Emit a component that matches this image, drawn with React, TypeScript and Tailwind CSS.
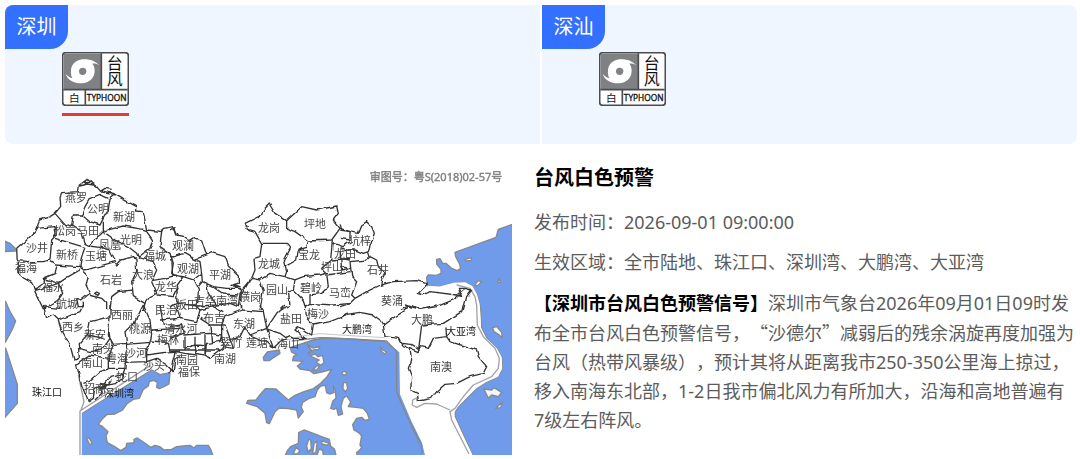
import React, { useState } from 'react';

interface Region {
  id: string;
  name: string;
}

interface MapLabel {
  text: string;
  x: number;
  y: number;
}

interface MapTile {
  id: string;
  transform: string;
  borders: string;
}

const regions: Region[] = [
  { id: 'shenzhen', name: '深圳' },
  { id: 'shenshan', name: '深汕' },
];

const districts: MapLabel[] = [
  { text: '燕罗', x: 76, y: 197 },
  { text: '公明', x: 98, y: 208 },
  { text: '新湖', x: 124, y: 216 },
  { text: '松岗', x: 65, y: 230 },
  { text: '马田', x: 88, y: 230 },
  { text: '凤凰', x: 110, y: 244 },
  { text: '光明', x: 131, y: 239 },
  { text: '沙井', x: 37, y: 247 },
  { text: '新桥', x: 67, y: 254 },
  { text: '玉塘', x: 96, y: 255 },
  { text: '福城', x: 155, y: 255 },
  { text: '福海', x: 26, y: 267 },
  { text: '石岩', x: 111, y: 279 },
  { text: '大浪', x: 143, y: 274 },
  { text: '福永', x: 53, y: 286 },
  { text: '龙华', x: 166, y: 286 },
  { text: '航城', x: 67, y: 303 },
  { text: '观澜', x: 183, y: 245 },
  { text: '观湖', x: 188, y: 268 },
  { text: '平湖', x: 220, y: 274 },
  { text: '民治', x: 166, y: 309 },
  { text: '坂田', x: 187, y: 304 },
  { text: '吉华', x: 205, y: 300 },
  { text: '南湾', x: 227, y: 300 },
  { text: '横岗', x: 250, y: 296 },
  { text: '龙岗', x: 269, y: 227 },
  { text: '坪地', x: 315, y: 223 },
  { text: '宝龙', x: 309, y: 254 },
  { text: '龙城', x: 269, y: 263 },
  { text: '龙田', x: 345, y: 253 },
  { text: '坪山', x: 332, y: 266 },
  { text: '坑梓', x: 360, y: 240 },
  { text: '石井', x: 378, y: 269 },
  { text: '园山', x: 277, y: 289 },
  { text: '碧岭', x: 311, y: 287 },
  { text: '马峦', x: 340, y: 292 },
  { text: '葵涌', x: 392, y: 300 },
  { text: '大鹏', x: 422, y: 319 },
  { text: '梅沙', x: 318, y: 313 },
  { text: '盐田', x: 291, y: 318 },
  { text: '东湖', x: 244, y: 323 },
  { text: '布吉', x: 214, y: 317 },
  { text: '清水河', x: 181, y: 328 },
  { text: '西乡', x: 73, y: 326 },
  { text: '西丽', x: 122, y: 314 },
  { text: '新安', x: 95, y: 334 },
  { text: '桃源', x: 140, y: 328 },
  { text: '梅林', x: 168, y: 339 },
  { text: '南头', x: 103, y: 348 },
  { text: '粤海', x: 117, y: 358 },
  { text: '沙河', x: 136, y: 352 },
  { text: '沙头', x: 154, y: 365 },
  { text: '南山', x: 92, y: 362 },
  { text: '蛇口', x: 127, y: 376 },
  { text: '招商', x: 95, y: 388 },
  { text: '南园', x: 187, y: 359 },
  { text: '福保', x: 189, y: 371 },
  { text: '南湖', x: 225, y: 358 },
  { text: '翠竹', x: 231, y: 342 },
  { text: '莲塘', x: 257, y: 342 },
  { text: '海山', x: 288, y: 343 },
  { text: '南澳', x: 441, y: 366 },
];

const waters: MapLabel[] = [
  { text: '珠江口', x: 47, y: 392 },
  { text: '深圳湾', x: 119, y: 393 },
  { text: '大鹏湾', x: 357, y: 329 },
  { text: '大亚湾', x: 461, y: 331 },
];

// Borders are stored per map tile, at three units to a map unit
const tiles: MapTile[] = [
  {
    id: 'nw',
    transform: 'translate(0 160) scale(0.3333)',
    borders:
      'M50,268 L75,245 105,215 118,180 150,170 165,160 182,140 180,110 185,98 235,95 238,75 262,58 275,70 290,80 300,92 340,100 370,118 410,140 410,153 430,155 440,210 485,215 490,205 520,200 535,225 M262,58 L256,70 270,66 M240,78 L262,72 285,76 M300,95 L315,85 335,88 M318,100 L340,102 M50,268 L52,305 60,345 95,365 105,395 130,447 M110,205 L165,200 168,225 155,240 150,300 130,305 90,305 52,302 M165,160 L200,200 215,195 220,165 245,165 255,140 270,115 300,103 325,115 M245,165 L270,185 300,195 310,175 325,150 330,115 345,103 M310,185 L310,215 M215,195 L245,215 255,250 270,258 280,240 300,225 310,215 330,208 370,198 430,208 440,212 M165,235 L215,250 255,262 M310,215 L345,240 385,260 410,280 415,292 M440,215 L458,240 450,265 415,292 M270,258 L300,262 330,270 345,300 M255,262 L245,290 240,320 165,315 150,305 M240,320 L245,330 265,328 345,305 350,315 365,300 400,290 408,295 M240,330 L205,350 175,370 130,355 M170,320 L165,340 130,355 130,370 105,390 M105,392 L145,380 175,370 188,400 175,420 130,447 M245,330 L265,350 258,375 270,400 245,420 230,415 M230,415 L235,440 250,440 250,425 M270,405 L305,415 320,430 320,450 M408,295 L410,335 395,365 398,390 355,395 335,410 330,450 M398,390 L400,410 435,430 450,410 470,400 455,365 470,330 460,305 415,292 M455,362 L495,355 530,345 M485,215 L480,260 510,280 520,310 515,340 530,350 M470,405 L520,410 535,380 M435,430 L430,450 M284,400 L294,406 298,400 290,396 Z',
  },
  {
    id: 'n',
    transform: 'translate(170 160) scale(0.3333)',
    borders:
      'M0,210 L15,200 20,225 40,230 60,245 75,235 95,240 105,270 110,285 75,298 45,280 10,290 0,290 M110,285 L125,278 165,290 175,315 205,345 205,370 185,375 215,390 240,360 250,350 M185,372 L210,380 190,378 M5,290 L8,345 40,350 70,360 95,340 90,305 75,298 M95,340 L97,365 130,380 170,385 215,385 M130,380 L160,402 205,405 M40,350 L22,375 20,430 M70,360 L85,390 83,430 M97,365 L85,380 M110,370 L115,400 140,435 180,430 205,440 210,405 215,390 M0,440 L20,430 83,438 140,435 M225,190 L275,165 280,150 298,132 315,160 350,182 395,140 440,150 500,138 505,160 490,180 510,205 485,240 415,243 375,215 350,205 350,182 M225,190 L232,208 255,215 275,250 350,250 360,262 340,300 345,320 380,300 385,270 410,262 415,243 M226,195 L236,200 M387,268 L396,262 M275,250 L270,290 252,295 255,330 245,355 270,360 300,340 345,350 375,360 M345,318 L350,335 345,350 M270,360 L280,390 270,450 M375,360 L370,390 355,395 360,435 330,450 M240,360 L225,385 210,410 215,450 M375,360 L400,350 450,345 470,340 455,325 485,300 490,240 M470,340 L475,380 455,400 420,405 420,430 405,440 400,420 370,390 M485,300 L540,295 M470,345 L540,335 M420,430 L490,435 540,430 M510,205 L540,215 M490,250 L520,260 540,245 M510,265 L515,330 540,325',
  },
  {
    id: 'ne',
    transform: 'translate(340 160) scale(0.3333)',
    borders:
      'M0,190 L5,210 30,215 55,220 65,195 80,185 95,200 103,220 95,245 85,275 70,280 45,270 20,270 0,262 M0,235 L30,240 30,215 M85,275 L90,290 110,300 115,320 135,340 125,360 122,375 80,395 45,415 35,405 50,365 35,350 30,305 80,300 90,290 M0,320 L30,325 M0,440 L30,430 45,415 M0,295 L30,300 M122,375 L160,365 230,362 262,372 235,400 250,405 270,395 350,405 375,385 395,390 380,410 370,450 M350,405 L365,410 355,385 375,385 M180,450 L210,435 240,448 290,440 340,420 365,400',
  },
  {
    id: 'sw',
    transform: 'translate(0 305) scale(0.3333)',
    borders:
      'M130,0 L140,40 160,30 175,45 185,75 210,120 222,165 238,160 235,120 265,85 270,50 330,35 330,0 M175,45 L240,20 250,0 M130,5 L180,10 M235,130 L275,140 310,130 330,100 325,60 M265,90 L310,100 M330,35 L325,90 340,118 325,160 270,150 230,180 245,240 265,290 280,280 285,250 310,240 330,215 370,205 375,190 325,190 325,160 M340,118 L380,115 375,80 405,50 430,0 M380,115 L375,190 M380,118 L450,112 455,90 450,45 430,0 M450,112 L440,140 440,170 375,172 M455,75 L540,70 M455,108 L505,112 510,140 440,150 M510,140 L540,138 M440,170 L470,160 500,180 520,200 525,160 540,155 M250,235 L265,230 300,200 325,192 M370,205 L370,220 350,235 300,245 310,260 285,285 M300,235 L325,240 335,225 M295,250 L320,245 M480,0 L490,60 M480,45 L540,40',
  },
  {
    id: 's',
    transform: 'translate(170 305) scale(0.3333)',
    borders:
      'M20,0 L30,40 80,50 90,15 75,0 M0,65 L35,60 40,85 0,100 M40,90 L120,85 155,90 150,110 110,115 105,150 80,145 75,120 45,130 M0,135 L150,135 M45,95 L45,135 M105,90 L105,150 M75,95 L75,120 105,122 M120,60 L125,115 M90,40 L120,60 155,60 165,35 215,15 280,20 290,70 240,90 225,65 210,95 180,100 165,60 155,60 155,90 M90,15 L130,5 160,20 M155,90 L160,130 145,140 120,160 105,150 M180,100 L190,130 160,125 M240,90 L290,110 310,130 290,70 M290,70 L320,25 345,0 M310,130 L330,110 360,95 370,100 405,100 375,75 385,65 425,90 430,60 480,50 530,30 M290,72 L330,85 350,100 M405,0 L410,40 430,60 M280,20 L270,0 M215,15 L215,0 M0,205 L15,140 45,145 80,150 M300,125 L318,132',
  },
  {
    id: 'se',
    transform: 'translate(340 305) scale(0.3333)',
    borders:
      'M0,40 L20,28 60,22 100,30 120,45 130,60 150,45 190,20 210,0 M130,60 L135,95 175,100 185,120 210,130 235,140 240,100 245,60 310,55 365,20 370,0 M185,115 L215,118 238,132 M195,0 L240,12 290,0 M235,140 L240,125 265,130 280,100 320,95 318,70 M320,95 L330,110 410,135 415,155 440,185 430,205 390,215 350,235 315,238 290,260 275,280 235,288 232,265 212,255 215,215 205,190 215,165 210,130 M296,260 L300,260',
  },
];

const mapFont = "font-['Noto_Sans','Noto_Sans_CJK_SC',sans-serif]";

function TyphoonIcon() {
  return (
    <svg viewBox="0 0 201 162" className="block h-[54px] w-[67px]" role="img" aria-label="台风白色预警">
      <rect x="2" y="2" width="197" height="158" rx="9" fill="#fff" stroke="#4b4c4e" strokeWidth="5" />
      <path d="M5 8Q5 5 8 5H118V112H5Z" fill="#808184" />
      <path d="M118 4V112M4 113H197M70 113V158" stroke="#4b4c4e" strokeWidth="5" fill="none" />
      <path
        d="M112 40C100 26 80 20 61 22C42 24 28 37 27 55C26 64 27 72 31 79C24 77 17 73 11 66C18 86 38 95 60 94C82 93 97 78 98 58C98 48 96 41 91 35C98 34 106 36 112 40Z"
        fill="#fff"
      />
      <circle cx="62" cy="58" r="11" fill="#808184" />
      <g fill="#111" textAnchor="middle" className={mapFont}>
        <text x="158" y="50" fontSize="48">台</text>
        <text x="158" y="99" fontSize="48">风</text>
        <text x="37" y="149" fontSize="32">白</text>
      </g>
      <text
        x="134"
        y="147"
        fontSize="25"
        fill="#111"
        stroke="#111"
        strokeWidth="1"
        textAnchor="middle"
        className="font-['Open_Sans','Noto_Sans',sans-serif]"
      >
        TYPHOON
      </text>
    </svg>
  );
}

function DistrictMap() {
  return (
    <svg viewBox="5 160 507 295" className="block h-auto w-full" role="img" aria-label="深圳市行政区划图">
      <defs>
        <filter id="rough" x="-5%" y="-5%" width="110%" height="110%">
          <feTurbulence type="fractalNoise" baseFrequency="0.14" numOctaves="1" seed="4" />
          <feDisplacementMap in="SourceGraphic" scale="4" xChannelSelector="R" yChannelSelector="G" />
          <feGaussianBlur stdDeviation="0.3" />
        </filter>
      </defs>

      {/* Sea */}
      <g fill="#6f9bea" stroke="#85898f" strokeWidth="4" strokeLinejoin="round">
        <g transform="translate(0 160) scale(0.3333)">
          <path d="M8,241 L30,250 47,266 46,273 8,275Z" />
        </g>
        <g transform="translate(0 305) scale(0.3333)">
          <path d="M8,-20 L18,-8 30,20 47,48 36,75 17,110 8,120Z" />
          <path d="M8,125 L17,130 52,238 52,295 17,335 8,345Z" />
        </g>
        <g transform="translate(80 330) scale(0.3333)">
          <path d="M4,250 L215,120 240,134 270,128 267,162 252,170 238,176 230,172 232,157 222,151 208,155 205,168 190,178 178,205 160,208 142,220 128,240 105,252 80,254 66,268 55,283 68,290 84,305 78,318 82,338 104,350 122,362 138,352 140,340 162,338 162,328 172,324 190,336 212,352 225,346 240,350 252,360 275,358 290,350 310,348 330,346 342,354 350,346 385,346 392,358 402,385 4,385Z" />
          <path d="M20,325 Q28,318 36,340 Q30,352 20,325Z" fill="#e8edf5" />
          <path d="M550,82 L562,66 598,60 600,70 582,82 568,92 552,92Z" />
          <path d="M632,52 L700,30 735,24 810,27 915,35 950,62 950,185 1020,345 1032,385 832,385 830,368 838,362 845,352 840,345 845,318 836,308 822,300 818,284 830,265 845,262 855,271 868,268 862,250 850,235 828,232 805,230 812,216 800,198 790,205 783,230 788,252 775,256 770,234 762,238 752,235 758,214 768,205 766,180 760,168 762,188 748,192 740,188 736,166 722,168 712,180 705,200 686,206 668,217 664,232 670,245 655,264 650,240 625,236 598,234 585,245 578,260 568,281 560,278 555,250 532,230 500,220 504,211 528,210 542,192 556,176 588,177 608,195 625,210 645,196 670,186 700,176 722,160 740,142 755,118 725,126 702,131 690,122 660,117 652,108 670,94 638,92 640,80 650,74 634,66Z" />
          <path d="M612,385 L622,362 632,350 655,340 656,308 672,300 700,310 725,320 748,328 752,348 764,358 770,385Z" />
          <g fill="#f4f7fb">
            <path d="M680,42 L698,54 720,50 716,58 700,60 684,72 694,60Z" />
            <path d="M690,78 L706,72 714,80 728,76 732,98 722,106 708,96 718,90Z" />
            <path d="M698,120 L712,106 718,110 710,120Z" />
            <ellipse cx="793" cy="130" rx="7" ry="5" />
            <path d="M790,158 L800,158 803,176 796,186 789,176Z" />
            <path d="M902,50 L908,60 920,66 914,72 904,64Z" />
            <path d="M686,328 L692,330 694,356 684,366 680,348Z" />
            <path d="M702,340 L712,334 708,366 698,372Z" />
            <path d="M724,332 L748,340 742,346 726,342Z" />
            <path d="M708,385 L718,356 728,362 732,385Z" />
            <path d="M640,372 L648,352 660,362 652,372Z" />
          </g>
        </g>
        <g transform="translate(340 305) scale(0.3333)">
          <path d="M520,-243 L475,-227 468,-203 345,-158 347,-145 358,-125 362,-110 352,-103 335,-110 318,-125 308,-125 300,-139 290,-137 290,-123 303,-107 303,-95 290,-89 265,-90 260,-83 262,-57 300,-55 340,-65 375,-67 395,-57 410,-35 418,-5 422,15 425,70 440,100 470,130 485,155 487,190 475,215 440,230 410,250 380,280 355,305 345,320 345,335 370,390 400,455 520,455Z" />
          <g fill="#f4f7fb">
            <path d="M375,-137 L395,-142 393,-134 377,-132Z" />
            <path d="M408,-65 L415,-73 425,-70 415,-60 405,-56Z" />
            <path d="M477,-80 L482,-68 473,-68Z" />
            <path d="M458,68 L470,65 485,82 487,98 475,88 462,80Z" />
            <path d="M432,252 L455,255 462,248 485,262 475,275 455,270 445,280Z" />
            <path d="M467,310 L488,290 482,308Z" />
          </g>
        </g>
      </g>

      {/* Limits of the sea areas */}
      <g fill="none" strokeLinejoin="round">
        <g transform="translate(340 305) scale(0.3333)">
          <path d="M262,-52 L300,-50 340,-61 375,-63 393,-53 406,-30 414,0 418,70 434,102 466,133 480,158 481,190 470,211 438,225 405,246 374,277 348,303 338,320 338,335 364,392 394,455" stroke="#fff" strokeWidth="11" />
          <path d="M350,-60 L390,-50 405,-25 410,0 412,60 430,95 465,130 478,160 475,190 455,215 400,240 370,275 345,310 330,320 335,345 387,447 M330,315 L290,297 255,295 230,307 217,300 218,285 232,278" stroke="#a0a3a8" strokeWidth="4" />
          <path d="M138,110 L178,142 180,268 214,348 246,413 256,455 246,455 236,410 170,262 170,142Z" fill="#6f9bea" />
          <path d="M-145,108 L-60,98 0,100 140,108 170,140 170,262 200,330 245,420 246,447" stroke="#83878e" strokeWidth="4" />
          <path d="M-160,105 L-110,92 -60,86 0,90 135,98" stroke="#c4c7cb" strokeWidth="3" />
        </g>
        <g transform="translate(0 305) scale(0.3333)">
          <path d="M242,450 L242,322 L450,190" stroke="#fff" strokeWidth="7" />
          <path d="M240,450 L240,318 L450,182 M242,318 L252,290 235,210" stroke="#9b9ea3" strokeWidth="4" />
        </g>
      </g>

      {/* District borders */}
      <g filter="url(#rough)" fill="none" stroke="#333" strokeLinejoin="round">
        {tiles.map((tile) => (
          <path key={tile.id} d={tile.borders} transform={tile.transform} strokeWidth="4" />
        ))}
      </g>

      <g fontSize="11" fill="#444" textAnchor="middle" dominantBaseline="central" className={mapFont}>
        {districts.map((label) => (
          <text key={label.text} x={label.x} y={label.y}>{label.text}</text>
        ))}
      </g>
      <g fontSize="10" fill="#111" textAnchor="middle" dominantBaseline="central" className={mapFont}>
        {waters.map((label) => (
          <text key={label.text} x={label.x} y={label.y}>{label.text}</text>
        ))}
      </g>
      <text x="436" y="181" fontSize="11" fill="#808080" stroke="#808080" strokeWidth="0.4" textAnchor="middle" className={mapFont}>
        审图号：粤S(2018)02-57号
      </text>
    </svg>
  );
}

export default function App() {
  const [selected, setSelected] = useState('shenzhen');

  return (
    <div
      lang="zh-CN"
      className="bg-white pt-[5px] pr-[3px] pl-[5px] font-['Noto_Sans','Noto_Sans_CJK_SC',sans-serif] [text-spacing-trim:space-all]"
    >
      <header className="grid grid-cols-2 gap-0.5 overflow-hidden rounded-lg">
        {regions.map((region) => (
          <section key={region.id} className="bg-[#eff6ff] pb-7">
            <h2 className="flex h-11 w-[63px] items-center justify-center rounded-br-[18px] bg-[#3370ff] text-xl text-white">
              {region.name}
            </h2>
            <button
              type="button"
              onClick={() => setSelected(region.id)}
              className={`mt-[3px] ml-[57px] block cursor-pointer border-b-[3px] pb-[7px] ${
                selected === region.id ? 'border-[#e03a3a]' : 'border-transparent'
              }`}
            >
              <TyphoonIcon />
            </button>
          </section>
        ))}
      </header>

      <main className="mt-4 grid grid-cols-[507fr_540fr] items-start gap-[22px] pr-[3px]">
        <DistrictMap />

        <article className="pt-0.5 text-lg text-[#5c5c5c]">
          <h1 className="mb-2 text-xl leading-8 font-bold text-black">台风白色预警</h1>
          <p className="leading-10">发布时间：2026-09-01 09:00:00</p>
          <p className="leading-10">生效区域：全市陆地、珠江口、深圳湾、大鹏湾、大亚湾</p>
          <p className="mt-[7px] leading-[29px]">
            <strong className="font-bold text-black">【深圳市台风白色预警信号】</strong>
            深圳市气象台2026年09月01日09时发布全市台风白色预警信号，
            <span className="font-['Noto_Sans_CJK_SC',sans-serif]">“沙德尔”</span>
            减弱后的残余涡旋再度加强为台风（热带风暴级），预计其将从距离我市250-350公里海上掠过，移入南海东北部，1-2日我市偏北风力有所加大，沿海和高地普遍有7级左右阵风。
          </p>
        </article>
      </main>
    </div>
  );
}
